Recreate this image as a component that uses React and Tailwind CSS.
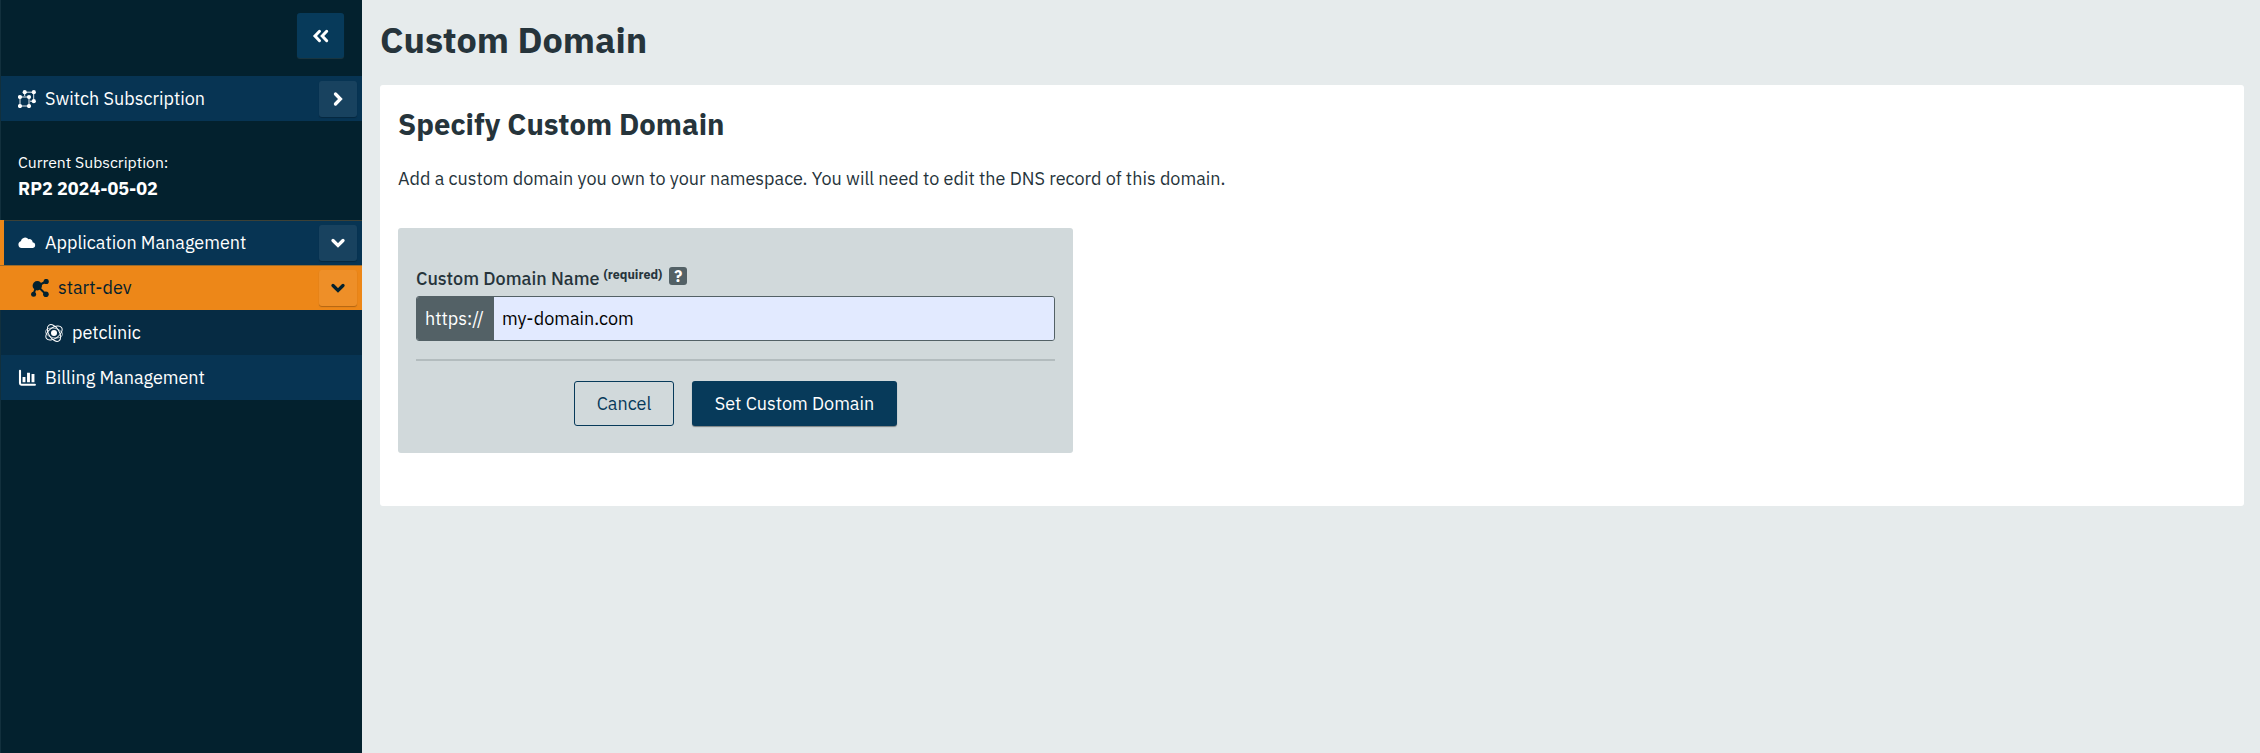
const svg = "h-[18px] w-[18px] shrink-0";

function GroupIcon() {
  return (
    <svg viewBox="0 0 18 18" className={svg} fill="none" stroke="currentColor">
      <path d="M2 7h9v9H2zM6.700 6V2.200h9v9H12" strokeWidth="0.9" />
      <g fill="currentColor" stroke="none">
        <circle cx="2" cy="7" r="2.100" />
        <circle cx="11" cy="7" r="2.100" />
        <circle cx="2" cy="16" r="2.100" />
        <circle cx="11" cy="16" r="2.100" />
        <circle cx="6.700" cy="2.200" r="2.100" />
        <circle cx="15.800" cy="2.200" r="2.100" />
        <circle cx="15.800" cy="11.200" r="2.100" />
      </g>
    </svg>
  );
}

function CloudIcon() {
  return (
    <svg viewBox="0 0 18 18" className={svg} fill="currentColor">
      <path d="M3.600 14A3.500 3.500 0 0 1 2.800 7.200 4.300 4.300 0 0 1 10.500 5.300 3 3 0 0 1 14.600 8.200 2.950 2.950 0 0 1 15 14z" />
    </svg>
  );
}

function NodesIcon() {
  return (
    <svg viewBox="0 0 18 18" className={svg} fill="currentColor" stroke="currentColor">
      <path d="M6.500 7 15 2.500M6.500 7 15 15.500M5.500 7 2.500 15" strokeWidth="2" />
      <g stroke="none">
        <circle cx="6.300" cy="6.700" r="4.700" />
        <circle cx="15.200" cy="2.500" r="2.600" />
        <circle cx="14.900" cy="15.200" r="2.800" />
        <circle cx="2.600" cy="15.200" r="2.500" />
      </g>
    </svg>
  );
}

function AtomIcon() {
  return (
    <svg viewBox="0 0 18 18" className={svg} fill="none" stroke="currentColor" strokeWidth="1">
      <ellipse cx="9" cy="9" rx="9.300" ry="5.300" transform="rotate(-36 9 9)" />
      <ellipse cx="9" cy="9" rx="9.300" ry="5.300" transform="rotate(58 9 9)" />
      <ellipse cx="9" cy="9" rx="8.600" ry="4.800" transform="rotate(12 9 9)" strokeWidth="0.6" />
      <circle cx="9" cy="9" r="3" fill="currentColor" stroke="none" />
    </svg>
  );
}

function ChartIcon() {
  return (
    <svg viewBox="0 0 18 18" className={svg} fill="none" stroke="currentColor">
      <path d="M2 1.700v12.600q0 1.400 1.400 1.400h13.500" strokeWidth="2.100" strokeLinecap="round" />
      <path d="M6 8v5.300M10.500 3.700v9.600M15 5v8.300" strokeWidth="2.900" />
    </svg>
  );
}

function Chevron({ className = "" }) {
  return (
    <svg viewBox="0 0 16 16" className={`h-4 w-4 ${className}`} fill="none" stroke="currentColor" strokeWidth="3.300">
      <path d="M3 5.500 8 10.400 13 5.500" strokeLinecap="round" />
    </svg>
  );
}

function DoubleLeft() {
  return (
    <svg viewBox="0 0 18 18" className={svg} fill="none" stroke="currentColor" strokeWidth="3">
      <path d="M7.500 4.300 3 9l4.500 4.700M14.700 4.300 10.200 9l4.500 4.700" strokeLinecap="round" />
    </svg>
  );
}

function Row({ icon, label, chevron, className }) {
  return (
    <div className={`flex h-[45px] items-center pr-[5px] ${className}`}>
      {icon}
      <span className="ml-[9px] grow text-[18px] leading-[27px]">{label}</span>
      {chevron && (
        <button className="flex h-9 w-[38px] items-center justify-center rounded-[3px] bg-white/[0.07] shadow-[0_1px_1px_rgba(0,0,0,0.25)]">
          {chevron}
        </button>
      )}
    </div>
  );
}

export default function App() {
  return (
    <div className="flex h-[753px] bg-[#e6ebec] font-['IBM_Plex_Sans',Roboto,sans-serif] text-[#26343b]">
      <aside className="w-[362px] shrink-0 border-l border-[#12303d] bg-[#03212e] text-white">
        <div className="flex h-[76px] justify-end pt-[13px] pr-[18px]">
          <button className="flex h-[45px] w-[47px] items-center justify-center rounded-[3px] bg-[#073a5a] shadow-[0_1px_1px_rgba(255,255,255,0.1)]">
            <DoubleLeft />
          </button>
        </div>
        <Row icon={<GroupIcon />} label="Switch Subscription" chevron={<Chevron className="-rotate-90" />} className="bg-[#073453] pl-[17px]" />
        <div className="flex h-[99px] flex-col pt-[29px] pl-[17px]">
          <div className="text-[15.750px] leading-6">Current Subscription:</div>
          <div className="mt-px text-[18px] leading-[27px] font-bold">RP2 2024-05-02</div>
        </div>
        <Row icon={<CloudIcon />} label="Application Management" chevron={<Chevron />} className="-ml-px border-l-4 border-[#ed8718] bg-[#073453] pl-[14px] shadow-[inset_0_1px_0_#3d4136]" />
        <Row icon={<NodesIcon />} label="start-dev" chevron={<Chevron />} className="-ml-px bg-[#ed8718] pl-[31px] text-[#03212e] shadow-[inset_0_1px_0_#9a6b2c]" />
        <Row icon={<AtomIcon />} label="petclinic" className="bg-[#062b43] pl-[44px]" />
        <Row icon={<ChartIcon />} label="Billing Management" className="bg-[#073453] pl-[17px]" />
      </aside>

      <main className="grow pr-4 pl-[18px]">
        <h1 className="flex h-[85px] items-start pt-[13px] text-[36px] leading-[54px] font-bold">Custom Domain</h1>
        <section className="h-[421px] rounded-[3px] bg-white px-[18px] pt-[17px]">
          <h2 className="text-[29.250px] leading-[44px] font-bold">Specify Custom Domain</h2>
          <p className="mt-[19px] text-[18px] leading-[27px]">
            Add a custom domain you own to your namespace. You will need to edit the DNS record of this domain.
          </p>
          <form className="mt-9 h-[225px] w-[675px] rounded-[3px] bg-[#d1d9db] px-[18px] pt-[34px]">
            <label className="flex h-[34px] items-start pt-[3px]">
              <span className="text-[18px] leading-[27px] font-medium">Custom Domain Name</span>
              <span className="mt-px ml-[4px] text-[12.500px] leading-4 font-bold">(required)</span>
              <span className="mt-[2px] ml-[7px] flex h-[18px] w-[18px] items-center justify-center rounded-[3px] bg-[#536166] text-[16px] leading-[18px] font-bold text-white">
                ?
              </span>
            </label>
            <div className="flex h-[45px] overflow-hidden rounded-[3px] border border-[#536166] text-[18px] leading-[27px]">
              <span className="flex w-[77px] shrink-0 items-center bg-[#536166] pl-2 text-white">https://</span>
              <span className="flex grow items-center bg-[#e2eaff] pl-2 text-black">my-domain.com</span>
            </div>
            <hr className="mt-[18px] h-[2px] border-0 bg-[#b3bcbe]" />
            <div className="mt-5 flex pl-[158px] text-[18px] leading-[27px]">
              <button type="button" className="h-[45px] w-[100px] rounded-[3px] border border-[#073a5a] text-[#073a5a]">Cancel</button>
              <button type="button" className="ml-[18px] h-[45px] w-[205px] rounded-[3px] bg-[#073a5a] text-white shadow-[0_1px_1px_rgba(0,0,0,0.4)]">Set Custom Domain</button>
            </div>
          </form>
        </section>
      </main>
    </div>
  );
}
